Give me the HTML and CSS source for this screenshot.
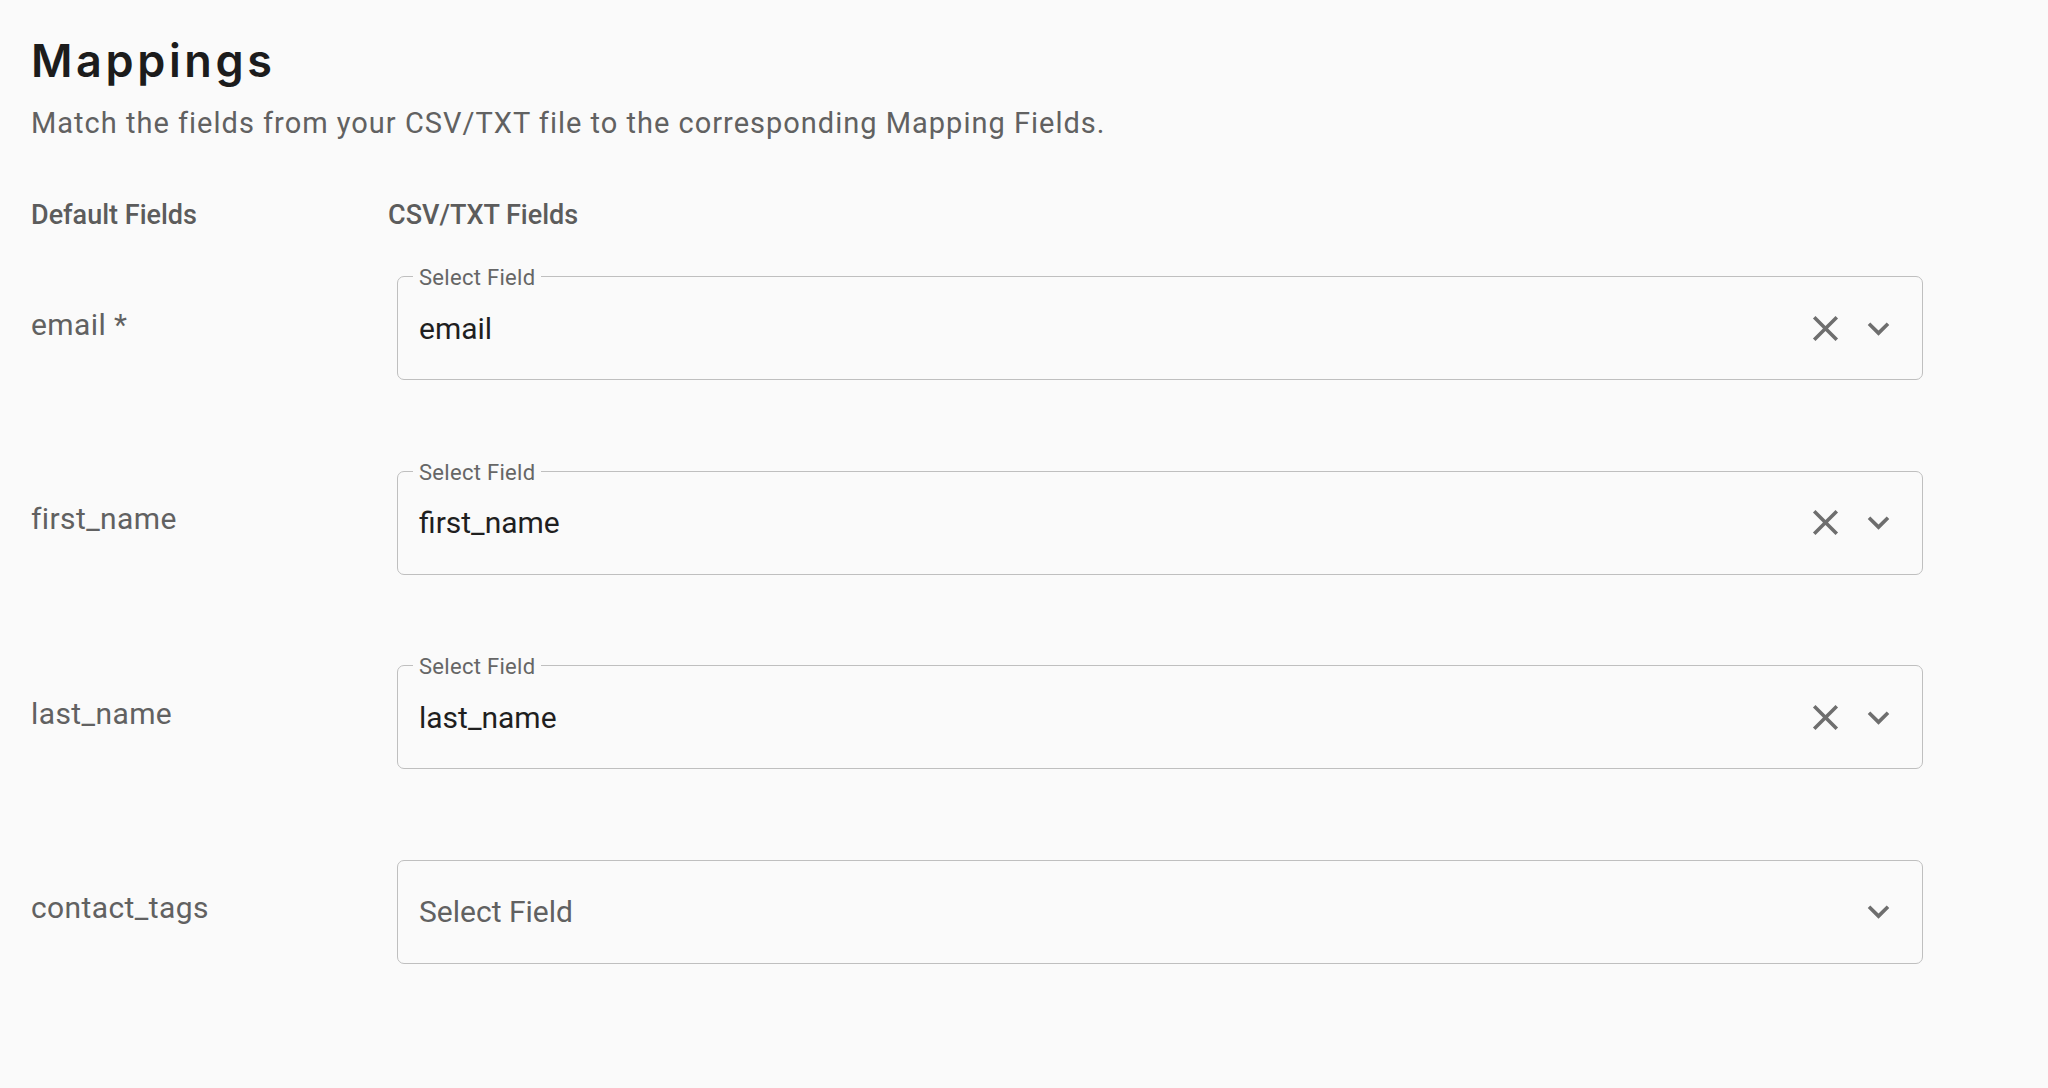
FILE: index.html
```html
<!DOCTYPE html>
<html lang="en">

<head>
    <meta charset="UTF-8">
    <meta name="viewport" content="width=device-width, initial-scale=1.0">
    <title>Mappings</title>
    <link rel="stylesheet" href="styles.css">
</head>

<body>
    <div class="pagina">
        <h1>Mappings</h1>
        <p class="subtitulo">Match the fields from your CSV/TXT file to the corresponding Mapping Fields.</p>

        <div class="cabeceras">
            <div class="cabecera">Default Fields</div>
            <div class="cabecera">CSV/TXT Fields</div>
        </div>

        <div class="filas">
            <div class="fila">
                <div class="campo">email *</div>
                <div class="selector">
                    <span class="etiqueta">Select Field</span>
                    <span class="valor">email</span>
                    <div class="iconos">
                        <svg viewBox="0 0 24 24"><path d="M19 6.41 17.59 5 12 10.59 6.41 5 5 6.41 10.59 12 5 17.59 6.41 19 12 13.41 17.59 19 19 17.59 13.41 12z"/></svg>
                        <svg viewBox="0 0 24 24"><path d="M16.59 8.59 12 13.17 7.41 8.59 6 10l6 6 6-6z"/></svg>
                    </div>
                </div>
            </div>

            <div class="fila">
                <div class="campo">first_name</div>
                <div class="selector">
                    <span class="etiqueta">Select Field</span>
                    <span class="valor">first_name</span>
                    <div class="iconos">
                        <svg viewBox="0 0 24 24"><path d="M19 6.41 17.59 5 12 10.59 6.41 5 5 6.41 10.59 12 5 17.59 6.41 19 12 13.41 17.59 19 19 17.59 13.41 12z"/></svg>
                        <svg viewBox="0 0 24 24"><path d="M16.59 8.59 12 13.17 7.41 8.59 6 10l6 6 6-6z"/></svg>
                    </div>
                </div>
            </div>

            <div class="fila">
                <div class="campo">last_name</div>
                <div class="selector">
                    <span class="etiqueta">Select Field</span>
                    <span class="valor">last_name</span>
                    <div class="iconos">
                        <svg viewBox="0 0 24 24"><path d="M19 6.41 17.59 5 12 10.59 6.41 5 5 6.41 10.59 12 5 17.59 6.41 19 12 13.41 17.59 19 19 17.59 13.41 12z"/></svg>
                        <svg viewBox="0 0 24 24"><path d="M16.59 8.59 12 13.17 7.41 8.59 6 10l6 6 6-6z"/></svg>
                    </div>
                </div>
            </div>

            <div class="fila">
                <div class="campo">contact_tags</div>
                <div class="selector">
                    <span class="valor vacio">Select Field</span>
                    <div class="iconos">
                        <svg viewBox="0 0 24 24"><path d="M16.59 8.59 12 13.17 7.41 8.59 6 10l6 6 6-6z"/></svg>
                    </div>
                </div>
            </div>
        </div>
    </div>
</body>

</html>
```

FILE: styles.css
```css
body {
    font-family: Roboto, "Liberation Sans", sans-serif;
    margin: 0;
    padding: 0;
    background-color: #fafafa;
}

.pagina {
    padding: 35px 125px 0 31px;
}

h1 {
    margin: 0;
    font-family: Inter, "Liberation Sans", sans-serif;
    font-size: 45px;
    line-height: 52px;
    font-weight: 600;
    letter-spacing: 3.6px;
    color: #1c1c1c;
}

.subtitulo {
    margin: 18px 0 0 0;
    font-size: 29px;
    line-height: 36px;
    letter-spacing: 1px;
    color: #616161;
}

.cabeceras {
    display: grid;
    grid-template-columns: 357px 1fr;
    margin-top: 58px;
    margin-bottom: 45px;
}

.cabecera {
    font-size: 27px;
    line-height: 32px;
    font-weight: 500;
    color: #5c5c5c;
}

.filas {
    display: flex;
    flex-direction: column;
    gap: 90.6px;
}

.fila {
    display: grid;
    grid-template-columns: 366px 1fr;
    align-items: center;
}

.campo {
    margin-bottom: 8px;
    font-size: 30px;
    letter-spacing: 0.4px;
    color: #616161;
}

.selector {
    position: relative;
    display: flex;
    align-items: center;
    height: 104px;
    padding: 0 22px 0 21px;
    border: 1px solid #bfbfbf;
    border-radius: 7px;
    box-sizing: border-box;
}

.etiqueta {
    position: absolute;
    top: -11px;
    left: 15px;
    padding: 0 6px;
    font-size: 22px;
    line-height: 24px;
    letter-spacing: 0.3px;
    color: #666666;
    background-color: #fafafa;
}

.valor {
    flex: 1;
    font-size: 30px;
    color: #1f1f1f;
}

.valor.vacio {
    color: #616161;
}

.iconos {
    display: flex;
    align-items: center;
    gap: 10px;
}

.iconos svg {
    width: 43px;
    height: 43px;
    fill: #6e6e6e;
}
```
